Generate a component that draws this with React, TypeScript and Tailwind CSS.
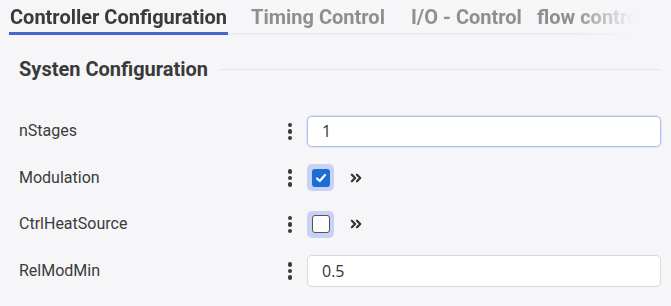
import React from 'react';

const Dots: React.FC = () => (
    <div className="flex w-[22px] flex-col items-center justify-center gap-[2px]">
        <span className="h-[4.5px] w-[4.5px] rounded-full bg-[#3a3a3a]" />
        <span className="h-[4.5px] w-[4.5px] rounded-full bg-[#3a3a3a]" />
        <span className="h-[4.5px] w-[4.5px] rounded-full bg-[#3a3a3a]" />
    </div>
);

const Chevrons: React.FC = () => (
    <svg viewBox="0 0 14 12" className="ml-[16px] h-[12px] w-[13px]" fill="none" stroke="#333" strokeWidth="2.4" strokeLinecap="round" strokeLinejoin="round">
        <path d="M2 2.5 L5.5 6 L2 9.5" />
        <path d="M7.5 2.5 L11 6 L7.5 9.5" />
    </svg>
);

const CheckBox: React.FC<{ checked: boolean }> = ({ checked }) => (
    <div className="flex h-[27px] w-[27px] items-center justify-center rounded-[5px] bg-[#c9d1f5]">
        {checked ? (
            <div className="flex h-[18px] w-[18px] items-center justify-center rounded-[3px] bg-[#1a6fd6]">
                <svg viewBox="0 0 12 12" className="h-[12px] w-[12px]" fill="none" stroke="white" strokeWidth="2.2" strokeLinecap="round" strokeLinejoin="round">
                    <path d="M2 6.5 L4.8 9 L10 3" />
                </svg>
            </div>
        ) : (
            <div className="h-[18px] w-[18px] rounded-[3px] border-[1.5px] border-[#555] bg-white" />
        )}
    </div>
);

const Row: React.FC<{ label: string; children: React.ReactNode }> = ({ label, children }) => (
    <div className="flex h-[46.5px] items-center">
        <div className="w-[279px] pl-[19px] text-[16px] text-[#3b3b3b]">{label}</div>
        <Dots />
        <div className="ml-[6px] flex flex-1 items-center pr-[10px]">{children}</div>
    </div>
);

export default function App() {
    return (
        <div className="h-[306px] w-[671px] overflow-hidden bg-[#f6f6f8]" style={{ fontFamily: 'Roboto, "Noto Sans", sans-serif' }}>
            <div className="mx-[9px] flex border-b-2 border-[#ececf0]" style={{ WebkitMaskImage: 'linear-gradient(to right, black 565px, transparent 625px)' }}>
                <div className="-mb-[2px] w-[219px] whitespace-nowrap border-b-[3px] border-[#4a66cc] px-[1px] pb-[1px] pt-[3px] text-[20px] font-bold leading-[28px] text-[#3a3a3a]">Controller Configuration</div>
                <div className="ml-[16px] w-[148px] whitespace-nowrap pt-[3px] text-center text-[20px] font-bold leading-[28px] text-[#8f8f8f]">Timing Control</div>
                <div className="ml-[19px] w-[109px] whitespace-nowrap pt-[3px] text-[20px] font-bold leading-[28px] text-[#8f8f8f]">I/O - Control</div>
                <div className="ml-[17px] whitespace-nowrap pt-[3px] text-[20px] font-bold leading-[28px] text-[#8f8f8f]">flow control</div>
            </div>
            <div className="mt-[20px] flex items-center pl-[19px] pr-[10px]">
                <div className="text-[20px] font-bold leading-[28px] text-[#3a3a3a]">Systen Configuration</div>
                <div className="ml-[11px] h-[1px] flex-1 bg-[#e6e6ea]" />
            </div>
            <div className="mt-[25px] flex flex-col">
                <Row label="nStages">
                    <div className="flex h-[31px] flex-1 items-center rounded-[5px] border border-[#b4c0f0] bg-white px-[14px] text-[16px] text-[#333] shadow-[0_0_0_1px_#dde3fa]" style={{ fontFamily: '"Open Sans", sans-serif' }}>1</div>
                </Row>
                <Row label="Modulation">
                    <CheckBox checked />
                    <Chevrons />
                </Row>
                <Row label="CtrlHeatSource">
                    <CheckBox checked={false} />
                    <Chevrons />
                </Row>
                <Row label="RelModMin">
                    <div className="flex h-[32px] flex-1 items-center rounded-[5px] border border-[#d9d9dd] bg-white px-[14px] text-[16px] text-[#333]" style={{ fontFamily: '"Open Sans", sans-serif' }}>0.5</div>
                </Row>
            </div>
        </div>
    );
}
